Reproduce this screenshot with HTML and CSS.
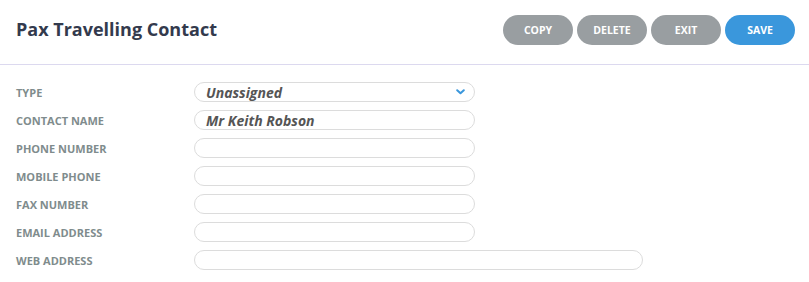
FILE: index.html
```html
<!DOCTYPE html>
<html>
<head>
<meta charset="utf-8">
<link rel="stylesheet" href="styles.css">
</head>
<body>
<div class="header">
  <h1 class="title">Pax Travelling Contact</h1>
  <div class="actions">
    <button class="btn btn-grey">COPY</button>
    <button class="btn btn-grey">DELETE</button>
    <button class="btn btn-grey">EXIT</button>
    <button class="btn btn-blue">SAVE</button>
  </div>
</div>
<div class="form">
  <div class="row">
    <label class="label">TYPE</label>
    <div class="field select">
      <span class="value">Unassigned</span>
      <svg class="chev" width="9" height="6" viewBox="0 0 9 6"><path d="M1.2 1.2 L4.5 4.3 L7.8 1.2" fill="none" stroke="#3a97dc" stroke-width="2" stroke-linecap="round" stroke-linejoin="round"/></svg>
    </div>
  </div>
  <div class="row">
    <label class="label">CONTACT NAME</label>
    <div class="field"><span class="value">Mr Keith Robson</span></div>
  </div>
  <div class="row">
    <label class="label">PHONE NUMBER</label>
    <div class="field"></div>
  </div>
  <div class="row">
    <label class="label">MOBILE PHONE</label>
    <div class="field"></div>
  </div>
  <div class="row">
    <label class="label">FAX NUMBER</label>
    <div class="field"></div>
  </div>
  <div class="row">
    <label class="label">EMAIL ADDRESS</label>
    <div class="field"></div>
  </div>
  <div class="row">
    <label class="label">WEB ADDRESS</label>
    <div class="field wide"></div>
  </div>
</div>
</body>
</html>
```
FILE: styles.css
```css
* { box-sizing: border-box; }
body {
  margin: 0;
  background: #fff;
  font-family: "Open Sans", "Noto Sans", sans-serif;
}
.header {
  display: flex;
  align-items: center;
  justify-content: space-between;
  height: 65px;
  padding: 0 14px 6px 16px;
  border-bottom: 1px solid #dcd9ef;
}
.title {
  margin: 0;
  font-size: 18px;
  font-weight: 700;
  color: #333a4d;
}
.actions {
  display: flex;
  gap: 4px;
  padding-top: 1px;
}
.btn {
  width: 70px;
  height: 30px;
  border: none;
  border-radius: 15px;
  color: #fff;
  font-family: "Open Sans", sans-serif;
  font-weight: 700;
  font-size: 10.5px;
  padding: 0;
}
.btn-grey { background: #999ea1; }
.btn-blue { background: #3a97dc; }
.form {
  padding: 17px 16px;
  display: flex;
  flex-direction: column;
  gap: 8px;
}
.row {
  display: grid;
  grid-template-columns: 178px auto;
  align-items: center;
}
.label {
  font-size: 11px;
  font-weight: 700;
  color: #7f8c8d;
  padding-top: 1px;
}
.field {
  width: 281px;
  height: 20px;
  border: 1px solid #dcdcdc;
  border-radius: 10px;
  padding: 0 10px 0 11px;
  display: flex;
  align-items: center;
  justify-content: space-between;
}
.field.wide { width: 449px; }
.value {
  font-size: 14px;
  font-weight: 700;
  font-style: italic;
  color: #555;
}
.chev { margin-right: -1px; }
```
